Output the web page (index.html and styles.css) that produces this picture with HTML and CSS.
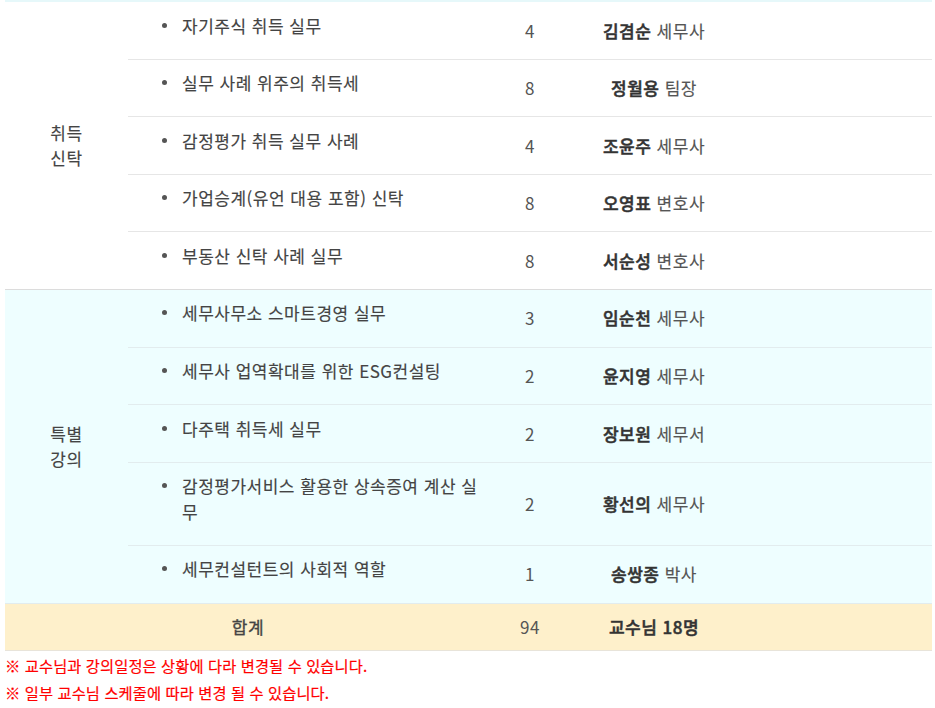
FILE: index.html
```html
<!DOCTYPE html>
<html lang="ko">
<head>
<meta charset="utf-8">
<link rel="stylesheet" href="styles.css">
</head>
<body>
<div class="wrap">
  <table class="curri">
    <colgroup>
      <col class="c-cat"><col class="c-title"><col class="c-num"><col class="c-name"><col class="c-etc">
    </colgroup>
    <tbody class="sec sec-white">
      <tr>
        <td class="cat" rowspan="5">취득<br>신탁</td>
        <td class="title"><div class="item">자기주식 취득 실무</div></td>
        <td class="num">4</td>
        <td class="name"><b>김겸순</b> 세무사</td>
        <td class="etc"></td>
      </tr>
      <tr>
        <td class="title"><div class="item">실무 사례 위주의 취득세</div></td>
        <td class="num">8</td>
        <td class="name"><b>정월용</b> 팀장</td>
        <td class="etc"></td>
      </tr>
      <tr>
        <td class="title"><div class="item">감정평가 취득 실무 사례</div></td>
        <td class="num">4</td>
        <td class="name"><b>조윤주</b> 세무사</td>
        <td class="etc"></td>
      </tr>
      <tr>
        <td class="title"><div class="item">가업승계(유언 대용 포함) 신탁</div></td>
        <td class="num">8</td>
        <td class="name"><b>오영표</b> 변호사</td>
        <td class="etc"></td>
      </tr>
      <tr>
        <td class="title"><div class="item">부동산 신탁 사례 실무</div></td>
        <td class="num">8</td>
        <td class="name"><b>서순성</b> 변호사</td>
        <td class="etc"></td>
      </tr>
    </tbody>
    <tbody class="sec sec-cyan">
      <tr>
        <td class="cat" rowspan="5">특별<br>강의</td>
        <td class="title"><div class="item">세무사무소 스마트경영 실무</div></td>
        <td class="num">3</td>
        <td class="name"><b>임순천</b> 세무사</td>
        <td class="etc"></td>
      </tr>
      <tr>
        <td class="title"><div class="item">세무사 업역확대를 위한 ESG컨설팅</div></td>
        <td class="num">2</td>
        <td class="name"><b>윤지영</b> 세무사</td>
        <td class="etc"></td>
      </tr>
      <tr>
        <td class="title"><div class="item">다주택 취득세 실무</div></td>
        <td class="num">2</td>
        <td class="name"><b>장보원</b> 세무서</td>
        <td class="etc"></td>
      </tr>
      <tr>
        <td class="title"><div class="item">감정평가서비스 활용한 상속증여 계산 실무</div></td>
        <td class="num">2</td>
        <td class="name"><b>황선의</b> 세무사</td>
        <td class="etc"></td>
      </tr>
      <tr>
        <td class="title"><div class="item">세무컨설턴트의 사회적 역할</div></td>
        <td class="num">1</td>
        <td class="name"><b>송쌍종</b> 박사</td>
        <td class="etc"></td>
      </tr>
    </tbody>
    <tbody class="sec sec-total">
      <tr>
        <td class="total-label" colspan="2">합계</td>
        <td class="num">94</td>
        <td class="name"><b>교수님 18명</b></td>
        <td class="etc"></td>
      </tr>
    </tbody>
  </table>
  <p class="note">※ 교수님과 강의일정은 상황에 다라 변경될 수 있습니다.</p>
  <p class="note">※ 일부 교수님 스케줄에 따라 변경 될 수 있습니다.</p>
</div>
</body>
</html>
```
FILE: styles.css
```css
html, body {
  margin: 0;
  padding: 0;
  background: #fff;
}
body {
  font-family: "Noto Sans CJK KR", "Noto Sans", sans-serif;
  font-size: 17px;
  letter-spacing: 0.5px;
  color: #444;
  -webkit-text-stroke: 0.15px currentColor;
}
.wrap {
  padding: 0 0 0 5px;
  width: 927px;
}
.curri {
  width: 927px;
  border-collapse: collapse;
  table-layout: fixed;
  border-top: 2px solid #e6f8fa;
}
.c-cat { width: 123px; }
.c-title { width: 363px; }
.c-num { width: 78px; }
.c-name { width: 170px; }
.c-etc { width: auto; }

.curri td {
  padding: 15.5px 0;
  line-height: 25.6px;
  vertical-align: middle;
  border-bottom: 1px solid #e6e6e6;
}
.sec-cyan td {
  background: #eefeff;
  border-bottom-color: #e2ecee;
}
.sec-white tr:last-child td,
.sec-white .cat {
  border-bottom-color: #dcdcdc;
}
.sec-total td {
  background: #fef0cb;
  padding: 10.5px 0;
  border-bottom-color: #e8e4da;
}
.cat {
  text-align: center;
  color: #444;
}
.title {
  padding-top: 10.5px !important;
  padding-bottom: 20.5px !important;
  padding-right: 8px !important;
  color: #444;
}
.item {
  display: flex;
  align-items: flex-start;
}
.item::before {
  content: "";
  flex: none;
  width: 5px;
  height: 5px;
  border-radius: 50%;
  background: #555;
  margin: 10px 15px 0 34px;
}
.num {
  text-align: center;
  color: #555;
  -webkit-text-stroke: 0;
}
.name {
  text-align: center;
  color: #555;
}
.name b {
  font-weight: 500;
  color: #333;
  -webkit-text-stroke: 0.5px #333;
}
.total-label {
  text-align: center;
  color: #444;
  -webkit-text-stroke: 0.35px #444;
}
.note {
  margin: 0;
  color: #f00;
  font-size: 15.3px;
  letter-spacing: 0.1px;
  line-height: 27px;
  -webkit-text-stroke: 0.2px #f00;
}
.note:first-of-type {
  padding-top: 1px;
}
```
